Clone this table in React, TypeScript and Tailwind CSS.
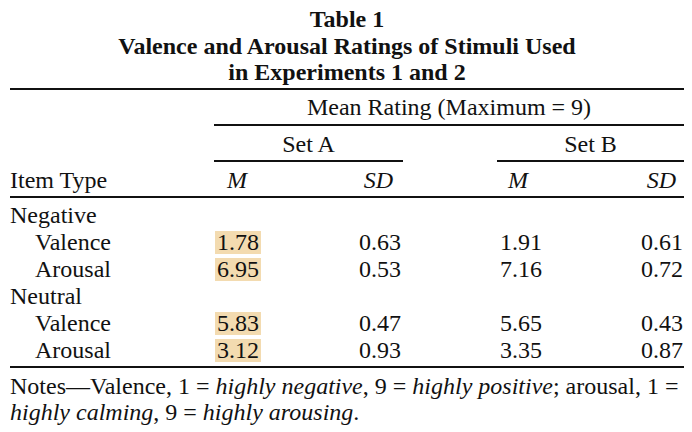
import React from "react";

interface Row {
  label: string;
  indent?: boolean;
  aM?: string;
  aSD?: string;
  bM?: string;
  bSD?: string;
}

const rows: Row[] = [
  { label: "Negative" },
  { label: "Valence", indent: true, aM: "1.78", aSD: "0.63", bM: "1.91", bSD: "0.61" },
  { label: "Arousal", indent: true, aM: "6.95", aSD: "0.53", bM: "7.16", bSD: "0.72" },
  { label: "Neutral" },
  { label: "Valence", indent: true, aM: "5.83", aSD: "0.47", bM: "5.65", bSD: "0.43" },
  { label: "Arousal", indent: true, aM: "3.12", aSD: "0.93", bM: "3.35", bSD: "0.87" },
];

export default function App() {
  return (
    <div className="w-[692px] h-[432px] bg-white text-[#111] font-['Liberation_Serif',serif] text-[24px] overflow-hidden">
      <div className="mx-[10px] w-[674px]">
        {/* Title */}
        <div className="h-[88px] pt-[6px] text-center font-bold leading-[26.5px]">
          <div>Table 1</div>
          <div>Valence and Arousal Ratings of Stimuli Used</div>
          <div>in Experiments 1 and 2</div>
        </div>

        <div className="grid grid-cols-[204px_96px_93px_94px_93px_94px] border-t-2 border-[#111] leading-[27px]">
          {/* Mean rating header */}
          <div className="col-start-2 col-span-5 pt-[4px] pb-[3px] text-center border-b-2 border-[#111]">
            Mean Rating (Maximum = 9)
          </div>

          {/* Set headers */}
          <div className="col-start-2 col-span-2 pt-[5px] pb-[2px] text-center border-b-2 border-[#111]">
            Set A
          </div>
          <div className="col-start-5 col-span-2 pt-[5px] pb-[2px] text-center border-b-2 border-[#111]">
            Set B
          </div>

          {/* Column headers */}
          <div className="col-span-6 grid grid-cols-subgrid pt-[5px] pb-[2px] border-b-2 border-[#111]">
            <div>Item Type</div>
            <div className="pl-[13px] italic">M</div>
            <div className="pr-[10px] text-right italic">SD</div>
            <div />
            <div className="pl-[11px] italic">M</div>
            <div className="pr-[8px] text-right italic">SD</div>
          </div>

          {/* Body */}
          <div className="col-span-6 grid grid-cols-subgrid pt-[4px] pb-[2px] border-b-2 border-[#111]">
            {rows.map((r, i) => (
              <React.Fragment key={i}>
                <div className={r.indent ? "pl-[25px]" : ""}>{r.label}</div>
                <div className="pl-[1px] flex items-center">
                  {r.aM && (
                    <span className="bg-[#f3dbb0] px-[2px] leading-[23px]">{r.aM}</span>
                  )}
                </div>
                <div className="pr-[2px] text-right">{r.aSD}</div>
                <div />
                <div className="pl-[3px]">{r.bM}</div>
                <div className="pr-[1px] text-right">{r.bSD}</div>
              </React.Fragment>
            ))}
          </div>
        </div>

        {/* Notes */}
        <div className="pt-[5px] leading-[26px] whitespace-nowrap">
          Notes—Valence, 1 = <i>highly negative</i>, 9 = <i>highly positive</i>; arousal, 1 =
          <br />
          <i>highly calming</i>, 9 = <i>highly arousing</i>.
        </div>
      </div>
    </div>
  );
}
